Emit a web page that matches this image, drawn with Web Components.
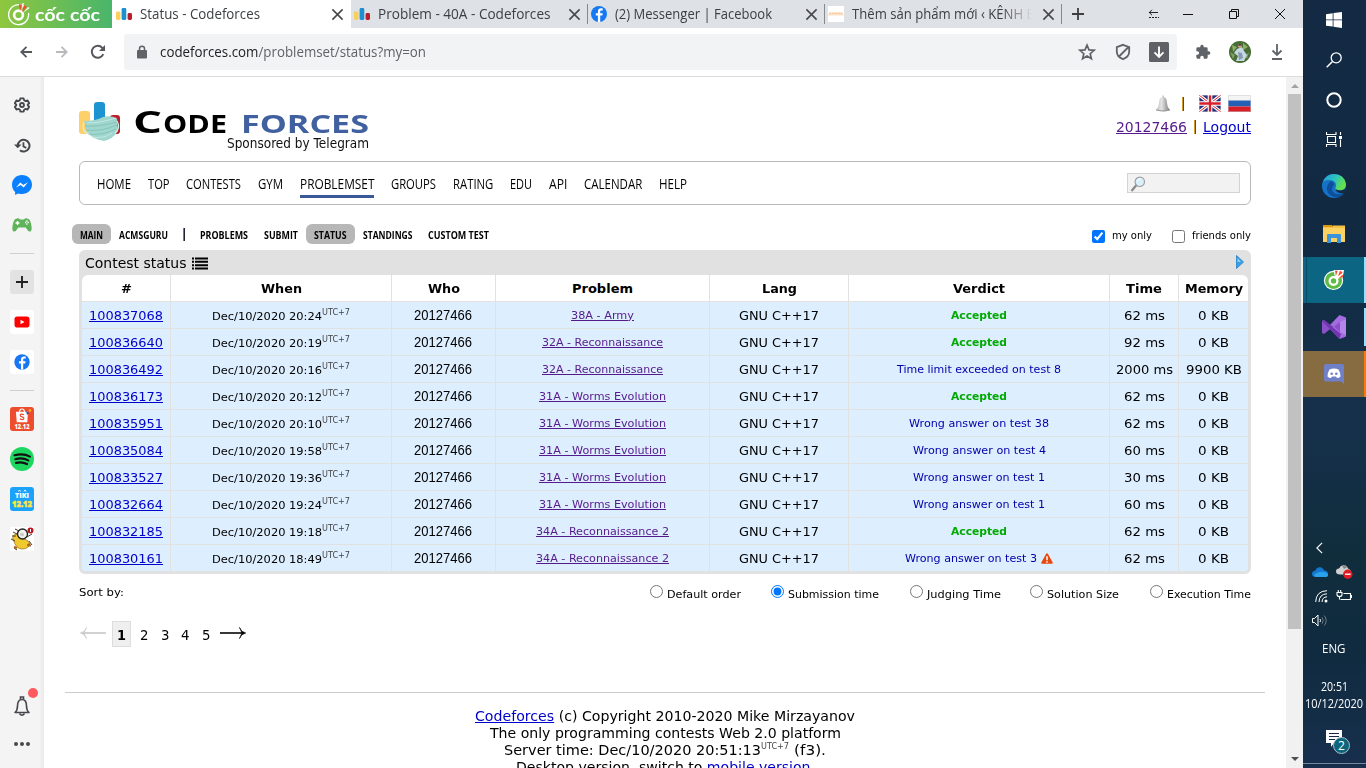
<!DOCTYPE html>
<html lang="en">
<head>
<meta charset="utf-8">
<title>Status - Codeforces</title>
<style>
html,body{margin:0;padding:0;height:100%;overflow:hidden;background:#fff}
body{font-family:"DejaVu Sans",Verdana,sans-serif;color:#000}
</style>
</head>
<body>
<app-desktop></app-desktop>
<script>
const define = (name, css, html) => customElements.define(name, class extends HTMLElement {
  constructor() {
    super();
    const tpl = document.createElement('template');
    tpl.innerHTML = `<style>${css}</style>${typeof html === 'function' ? html(this) : html}`;
    this.attachShadow({mode: 'open'}).appendChild(document.importNode(tpl.content, true));
  }
});
/* text run with a fixed advance width */
const t = (w, s, style = '') => `<fit-text w="${w}" style="${style}">${s}</fit-text>`;
const ic = (n, w, h, style = '') => `<ui-icon name="${n}" w="${w}" h="${h || w}" style="${style}"></ui-icon>`;

const coc = (ring, inner) => `<path d="M17.5 4.5A10 10 0 1 0 21.5 11" fill="none" stroke="${ring}" stroke-width="1.3"/><circle cx="11.5" cy="13" r="4.4" fill="none" stroke="${inner}" stroke-width="2.6"/>`;
const bars = '<rect x="0" y="5.5" width="4.4" height="8.5" rx="1.4" fill="#fbcf5b"/><rect x="5.6" y="2" width="4.7" height="12" rx="1.4" fill="#1e8fcf"/><rect x="11.6" y="7" width="4.4" height="7" rx="1.4" fill="#b81f2d"/>';
const ICONS = {
  coc: ['0 0 24 24', coc('#fff', '#fff') + '<path d="M13 9l-1-7 3 1zM15 10l2-7 3 2z" fill="#f0502f"/><path d="M14.500 9l1-8 1.500.3zM16 11l5-6 1.500 1z" fill="#fff"/>'],
  coctask: ['0 0 24 24', '<circle cx="11.500" cy="12.500" r="10.500" fill="#fff"/><circle cx="11.500" cy="12.500" r="9.300" fill="#5fba46"/><circle cx="11.500" cy="13" r="4.200" fill="#5fba46" stroke="#fff" stroke-width="2.500"/><path d="M13 9L11.500 1 23 1 21.500 9l-6 2z" fill="#fff"/><path d="M14 8l-.8-6.500L16 2zM16.500 8l2-6.500L21.500 4zM17 10l4.500-4 .5 3z" fill="#ee5130"/>'],
  bars: ['0 0 16 16', bars],
  close: ['0 0 14 14', '<path d="M1.500 1.500l11 11M12.500 1.500l-11 11" stroke="#46484b" stroke-width="1.700"/>'],
  fb: ['0 0 16 16', '<circle cx="8" cy="8" r="8" fill="#1479f2"/><path d="M9.200 16V9.600h2.100l.4-2.400H9.200V5.800c0-.8.4-1.300 1.300-1.300h1.200V2.500c-2.900-.6-4.800.2-4.800 2.900v1.800H4.800v2.400h2.100V16z" fill="#fff"/>'],
  shopfav: ['0 0 16 16', '<path d="M0 0h16v16H0z" fill="#fff"/><path d="M1 7.500h14" stroke="#fbc998" stroke-width="2" stroke-dasharray="2.500 .3"/><path d="M0 9h16" stroke="#fbe0c4" stroke-width="1"/>'],
  plus: ['0 0 12 12', '<path d="M6 0v12M0 6h12" stroke="#3c3e40" stroke-width="1.800"/>'],
  collapse: ['0 0 12 10', '<path d="M1 3.500h9M4 .8L1.300 3.500 4 6.200" fill="none" stroke="#222" stroke-width="1"/><path d="M1 8.500h10" stroke="#222" stroke-dasharray="2 1"/>'],
  min: ['0 0 10 10', '<path d="M0 5.500h10" stroke="#111"/>'],
  restore: ['0 0 10 10', '<path d="M.5 2.500h7v7h-7zM2.500 2V.5h7v7H8" fill="none" stroke="#111"/>'],
  winclose: ['0 0 10 10', '<path d="M0 0l10 10M10 0L0 10" stroke="#111"/>'],
  back: ['0 0 12 12', '<path d="M12 6H1.500M6.500.8L1.300 6l5.200 5.200" fill="none" stroke="#55585c" stroke-width="1.800"/>'],
  fwd: ['0 0 12 12', '<path d="M0 6h10.500M5.500.8L10.700 6l-5.200 5.200" fill="none" stroke="#b8babd" stroke-width="1.800"/>'],
  reload: ['0 0 16 16', '<path d="M13.300 10.200A6 6 0 1 1 12.300 3.800L14 5.500" fill="none" stroke="#55585c" stroke-width="2"/><path d="M15 1v6H9z" fill="#55585c"/>'],
  lock: ['0 0 12 14', '<rect x="1" y="5" width="10" height="8.500" rx="1" fill="#5f6368"/><path d="M3.500 5.500V3.800a2.500 2.500 0 0 1 5 0v1.700" fill="none" stroke="#5f6368" stroke-width="1.500"/>'],
  star: ['0 0 18 18', '<path d="M9 2.200l2 4.700 5.100.4-3.900 3.400 1.200 5L9 13l-4.400 2.700 1.200-5L1.900 7.300 7 6.900z" fill="none" stroke="#5f6368" stroke-width="1.700"/>'],
  shield: ['0 0 18 18', '<path d="M9 1.800l6.200 2.300v4.400c0 3.700-2.600 6.300-6.200 7.700-3.600-1.400-6.200-4-6.200-7.700V4.100zM5 13.500l9-9" fill="none" stroke="#5f6368" stroke-width="1.800"/>'],
  dlbox: ['0 0 20 20', '<rect width="20" height="20" rx="1.500" fill="#5f6166"/><path d="M10 4.500v10M5.500 10.300l4.500 4.500 4.500-4.500" fill="none" stroke="#fff" stroke-width="1.900"/>'],
  puzzle: ['0 0 24 24', '<path d="M20.500 11H19V7a2 2 0 0 0-2-2h-4V3.500a2.500 2.500 0 0 0-5 0V5H4a2 2 0 0 0-2 2v3.800h1.500a2.700 2.700 0 0 1 0 5.400H2V20a2 2 0 0 0 2 2h3.800v-1.500a2.700 2.700 0 0 1 5.400 0V22H17a2 2 0 0 0 2-2v-4h1.500a2.500 2.500 0 0 0 0-5z" fill="#5f6368"/>'],
  avatar: ['0 0 22 22', '<circle cx="11" cy="11" r="11" fill="#476c35"/><path d="M3 4l5 2-4 5zM14 2l5 4-5 3z" fill="#8cae65"/><path d="M1 11l5 3-2 4zM16 15l4-4-2 7z" fill="#7fa060"/><path d="M8 8l5-2 2 4 3 4-3 6H7l2-5-4-3z" fill="#c8d7e6"/><path d="M9 11l4 1 1 5-4 2z" fill="#889cac"/><circle cx="11" cy="5" r="2" fill="#c9a48c"/><path d="M9 4.500q2-3 4 0z" fill="#222"/>'],
  download: ['0 0 12 16', '<path d="M6 0v11M1.500 6.500L6 11l4.500-4.500M1 15h10" fill="none" stroke="#5f6368" stroke-width="1.800"/>'],
  gear: ['0 0 24 24', '<path d="M9.500 2h5l.7 3 2.200 1.200 3-1 2.400 4.200-2.300 2.100v1l2.300 2.100-2.400 4.200-3-1-2.200 1.200-.7 3h-5l-.7-3-2.200-1.200-3 1-2.400-4.200 2.300-2.100v-1L1.200 9.400l2.400-4.200 3 1L8.800 5z" fill="none" stroke="#46484b" stroke-width="2.700" stroke-linejoin="round"/><circle cx="12" cy="12" r="3" fill="none" stroke="#46484b" stroke-width="2.700"/>'],
  history: ['0 0 18 16', '<path d="M4 8A6.200 6.200 0 1 1 6.300 13" fill="none" stroke="#46484b" stroke-width="2.100"/><path d="M0 7h8L4 11z" fill="#46484b"/><path d="M10 4.500V9l3 1.500" fill="none" stroke="#46484b" stroke-width="1.900"/>'],
  messenger: ['0 0 20 20', '<path d="M10 0C4.400 0 0 4.100 0 9.700c0 2.900 1.200 5.400 3.100 7.200V20l3-1.500c1.200.4 2.500.6 3.900.6 5.600 0 10-4.100 10-9.500S15.600 0 10 0z" fill="#0a80ff"/><path d="M4 12.500l4.300-5 3 2.500L16 7.200l-4.300 5.200-3-2.400z" fill="#fff"/>'],
  pad: ['0 0 20 14', '<path d="M4 .7q3-1 4 .8h4q1-1.800 4-.8 2 .6 3 5 1.500 6-.2 7.500-1.600 1-3.300-1.200L13.700 9.500H6.300L4.500 12q-1.700 2.200-3.300 1.200Q-.5 11.700 1 5.700 2 1.300 4 .7z" fill="#5fb35a"/><path d="M5.500 3v4M3.500 5h4" stroke="#fff" stroke-width="1.400"/><path d="M13 4.500h1.300M15.500 4.500h1.300M14.200 3h1.300M14.200 6.200h1.300" stroke="#fff" stroke-width="1.300"/>'],
  addbox: ['0 0 24 24', '<rect width="24" height="24" rx="3" fill="#e2e2e2"/><path d="M12 6v12M6 12h12" stroke="#222" stroke-width="1.900"/>'],
  yt: ['0 0 24 24', '<rect width="24" height="24" rx="3" fill="#fff"/><rect x="4.500" y="6.500" width="15" height="11" rx="2.800" fill="#f00"/><path d="M10.500 9.700v4.600l4-2.300z" fill="#fff"/>'],
  fbbox: ['0 0 24 24', '<rect width="24" height="24" rx="3" fill="#fff"/><circle cx="12" cy="12" r="7.700" fill="#1877f2"/><path d="M13.200 19.600v-6.200h2l.4-2.200h-2.400V9.800c0-.8.4-1.200 1.300-1.200h1.200v-2c-2.900-.5-4.700.3-4.700 2.900v1.700H9v2.200h2v6.200z" fill="#fff"/>'],
  shopee: ['0 0 24 24', '<rect width="24" height="24" rx="3" fill="#ee4d2d"/><path d="M6 4.800h12l-.7 10.500H6.700z" fill="#fff"/><path d="M9.500 5.500q0-3.500 2.500-3.500t2.500 3.500" fill="none" stroke="#fff" stroke-width="1.200"/><path d="M14 7.800q-3.800-1.500-3.800.6 0 1 2 1.500 2 .6 1.700 1.700-.8 1.800-4 .3" fill="none" stroke="#ee4d2d" stroke-width="1.200"/><path d="M16 4l3 2-2 2z" fill="#244fae"/><circle cx="20" cy="3.500" r="1.200" fill="#ffbc18"/><text x="12" y="22" text-anchor="middle" font-family="Open Sans" font-weight="800" font-size="6.500" fill="#fff" textLength="15" lengthAdjust="spacingAndGlyphs">12.12</text>'],
  spotify: ['0 0 24 24', '<circle cx="12" cy="12" r="12" fill="#1ed760"/><path d="M4.500 8.300q8.500-2.500 15.500 1.300M5.300 12.200q7-2 13 1.200M6 15.900q6-1.500 11 1.100" fill="none" stroke="#111" stroke-width="2.200" stroke-linecap="round"/>'],
  tiki: ['0 0 24 24', '<rect width="24" height="24" rx="3" fill="#1ba2fb"/><path d="M8.500 4.500q1-3 2 0M14 4.500q1-3 2 0" fill="none" stroke="#fff"/><text x="12" y="11" text-anchor="middle" font-family="Open Sans" font-weight="800" font-size="7.500" fill="#fff" textLength="14" lengthAdjust="spacingAndGlyphs">TIKI</text><text x="12" y="20.300" text-anchor="middle" font-family="Open Sans" font-weight="800" font-size="8.500" fill="#ffe739" stroke="#ffe739" stroke-width=".5" textLength="20" lengthAdjust="spacingAndGlyphs">12.12</text>'],
  duck: ['0 0 24 24', '<path d="M0 0h24v24H0z" fill="#fff"/><path d="M3 12q-1-4 3-5l12 7 2 3q-2 5-8 5T3 12z" fill="#efc92d" stroke="#9a7a26" stroke-width=".8"/><path d="M3 5l4 2M1 12l4 2M17 10l5-3M19 14l3 4M4 21l3 2M17 18l4 1M5 2l4 2M2 9l4 0" stroke="#4c3c28" stroke-width="1"/><circle cx="12.500" cy="7" r="5" fill="#f5f5ef" stroke="#222" stroke-width="1.400"/><circle cx="12" cy="7.500" r="2" fill="#ccc"/><path d="M6 19.500l-1 2M18 17l2 2" stroke="#b4631b" stroke-width="3"/><circle cx="20.500" cy="3.500" r="3" fill="#b9161d"/><path d="M20.500 2v3" stroke="#fff"/>'],
  bell: ['0 0 18 22', '<path d="M2 17.500q2.500-2 2.500-6.500 0-6.500 4.500-6.500t4.500 6.500q0 4.500 2.500 6.500z" fill="none" stroke="#46484b" stroke-width="1.600" stroke-linejoin="round"/><path d="M7.500 4V2h3v2M6.500 18.500q2.500 3.500 5 0" fill="none" stroke="#46484b" stroke-width="1.600"/>'],
  dots: ['0 0 16 4', '<circle cx="2" cy="2" r="2" fill="#46484b"/><circle cx="8" cy="2" r="2" fill="#46484b"/><circle cx="14" cy="2" r="2" fill="#46484b"/>'],
  mask: ['0 0 42 40', '<rect x="0" y="9" width="11" height="23" rx="3" fill="#fdd06a"/><rect x="15" y="0" width="11" height="25" rx="3" fill="#1c94d2"/><rect x="31" y="13" width="10" height="19" rx="3" fill="#bd1f2d"/><path d="M5 19q12 0 19-4 8-2 14 1.500l1 12.500q-5 8-14 10-12-2-17-9z" fill="#9fd6ce"/><path d="M6 24q14 1 32-4M7 28q15 2 31-5M9 32q14 2 28-5" fill="none" stroke="#86c5bb"/><path d="M8 21q13 0 29-5M13 35q12 2 20-4" fill="none" stroke="#c4e8e1"/><path d="M5 20q-3 10 5 12M38 19q4 7-2 12" fill="none" stroke="#d8efe9" stroke-width="1.100"/>'],
  graybell: ['0 0 16 17', '<defs><linearGradient id="g"><stop stop-color="#bbb"/><stop offset=".4" stop-color="#e4e4e4"/><stop offset="1" stop-color="#777"/></linearGradient></defs><path d="M7 2V.5h2V2q3 1 3 6 0 4 3 7-7 3-14 0 3-3 3-7 0-5 3-6z" fill="url(#g)"/><path d="M1 15q7 2 14 0" stroke="#999" fill="none"/>'],
  uk: ['0 0 22 17', '<path d="M0 0h22v17H0z" fill="#2a3379"/><path d="M0 0l22 17M22 0L0 17" stroke="#fff" stroke-width="3.200"/><path d="M0 0l22 17M22 0L0 17" stroke="#d22" stroke-width="1"/><path d="M11 0v17M0 8.500h22" stroke="#fff" stroke-width="4.600"/><path d="M11 0v17M0 8.500h22" stroke="#d81f2c" stroke-width="2.400"/><path d="M.5.500h21v16H.5z" fill="none" stroke="#fff" stroke-opacity=".35"/>'],
  ru: ['0 0 23 17', '<path d="M0 0h23v17H0z" fill="#f4f4f4"/><path d="M0 5.500h23v6H0z" fill="#2560b5"/><path d="M0 11.500h23V17H0z" fill="#d81f28"/><path d="M.5.500h22v16H.5z" fill="none" stroke="#ccc" stroke-opacity=".5"/>'],
  mag: ['0 0 16 16', '<path d="M1.500 15l5-6" stroke="#8b8b8b" stroke-width="2.300"/><circle cx="9.800" cy="5.800" r="4.700" fill="#d9f0fb" stroke="#9b9fa3" stroke-width="1.200"/><path d="M7 5q1.500-3 4-2" stroke="#fff" fill="none"/>'],
  list: ['0 0 16 13', '<path d="M0 1.500h2M0 4.800h2M0 8.200h2M0 11.500h2M3 1.500h13M3 4.800h13M3 8.200h13M3 11.500h13" stroke="#000" stroke-width="1.900"/>'],
  play: ['0 0 8 14', '<path d="M.5.500L7.500 7l-7 6.500z" fill="#34a1e6" stroke="#3a8ccc"/><path d="M1.500 3L5 7H1.500z" fill="#8bd0f7"/>'],
  warn: ['0 0 12 11', '<path d="M6 .3q.7 0 1 .7l4.700 8.500q.4 1.300-.8 1.300H1.100Q-.1 10.800.3 9.500L5 1q.3-.7 1-.7z" fill="#e8480c"/><path d="M6 3.300v3.900M6 8.200v1.500" stroke="#fff" stroke-width="1.500"/>'],
  larr: ['0 0 26 12', '<path d="M26 6H2" stroke="#ccc" stroke-width="1.800"/><path d="M6.500.5Q5 5 .3 6 5 7 6.500 11.500L4 6z" fill="#ccc" stroke="#ccc" stroke-width=".7"/>'],
  rarr: ['0 0 26 12', '<path d="M0 6h24" stroke="#222" stroke-width="1.800"/><path d="M19.500.5Q21 5 25.700 6 21 7 19.500 11.500L22 6z" fill="#000" stroke="#000" stroke-width=".7"/>'],
  win: ['0 0 16 16', '<path d="M0 2.200L6.700 1.200v6.300H0zM7.500 1.100L16 0v7.500H7.500zM0 8.300h6.700v6.300L0 13.700zM7.500 8.300H16V16l-8.500-1.200z" fill="#fff"/>'],
  tsearch: ['0 0 16 16', '<circle cx="10.200" cy="5.800" r="5" fill="none" stroke="#fff" stroke-width="1.300"/><path d="M6.500 9.500L.7 15.300" stroke="#fff" stroke-width="1.500"/>'],
  cortana: ['0 0 16 16', '<circle cx="8" cy="8" r="6.700" fill="none" stroke="#fff" stroke-width="2"/>'],
  taskview: ['0 0 16 16', '<path d="M.5 0v2.500h9.500V0M.5 15v-2.500h9.500V15M1.500 4.500h8v6h-8zM14.500 0v3M14.500 7.500V15" fill="none" stroke="#fff" stroke-width="1.100"/><path d="M13 4h3v3h-3z" fill="#fff"/>'],
  edge: ['0 0 24 24', '<defs><linearGradient id="e" x2="1" y2=".4"><stop stop-color="#2493e0"/><stop offset=".55" stop-color="#2cc4c0"/><stop offset="1" stop-color="#65df4c"/></linearGradient></defs><circle cx="12" cy="12" r="12" fill="#1572c6"/><path d="M0 12Q0 6 6 6q8 0 8 5 0 3-1 4 2 2 7 1 4-1 4-6Q22 0 12 0 2 0 0 12z" fill="url(#e)"/><path d="M9 7Q4 11 5 16q2 7 10 7.500 5-1 7-4.500-8 3-11-1-2-2 0-6 3-2-2-5z" fill="#0d4f9d"/><path d="M13.500 15q3 2.500 9 .5l1.500-2L23 19l-2 .5q-7-.5-7.500-4.500z" fill="#132a43"/>'],
  folder: ['0 0 22 19', '<path d="M0 1h9l1 2H0z" fill="#d8960b"/><path d="M0 3h22v15H0z" fill="#fbd164"/><path d="M0 3h9l1-1.500h12V4H0z" fill="#f5c243"/><path d="M4 19v-8q0-1 1-1h12q1 0 1 1v8h-4v-5H8v5z" fill="#3b94db"/>'],
  vs: ['0 0 24 24', '<path d="M0 6l2-1 16 13V6L2 19l-2-1z" fill="#8a4fc9"/><path d="M17.500 0L24 2.500v19L17.500 24 8 14l3.500-3 6.500 6V7l-6.500 5L8 10z" fill="#a56be0"/><path d="M0 6l2-1 17 14-1.500 5z" fill="#7336b0"/><path d="M18 7v10l6 3V4z" fill="#b685eb"/>'],
  discord: ['0 0 20 20', '<path d="M2 0h16q2 0 2 2v18l-3-2.500H2q-2 0-2-2V2q0-2 2-2z" fill="#7080c8"/><path d="M5.500 5.500q4.500-2 9 0 2 3 2 7-1.500 1.500-3.500 1.500l-1-1.500H8L7 14q-2 0-3.500-1.500 0-4 2-7z" fill="#fff"/><circle cx="7.700" cy="9.800" r="1.300" fill="#7080c8"/><circle cx="12.300" cy="9.800" r="1.300" fill="#7080c8"/>'],
  chev: ['0 0 8 14', '<path d="M7 1L1 7l6 6" fill="none" stroke="#fff" stroke-width="1.300"/>'],
  cloud: ['0 0 16 10', '<path d="M4 10Q0 10 0 7q0-3 3.200-3.300Q4.500 0 8 .2q3 .2 4.200 3.300Q16 3.700 16 7q0 3-3 3z" fill="#1278cf"/><path d="M4 10Q1 9 3 7q5-3 9-2 4 1 4 3t-3 2z" fill="#2aa2ea"/>'],
  cloudno: ['0 0 17 14', '<path d="M4 9.500Q0 9.500 0 6.500q0-3 3-3Q5-.2 8 .3q3 .2 4 3.200 3 1 3 4l-3 2z" fill="#d0d0d0"/><path d="M6 1Q9-1 11.500 2L8 4z" fill="#888"/><circle cx="11.800" cy="9.200" r="4.700" fill="#dd1c25"/><path d="M9 9.200h5.600" stroke="#fff" stroke-width="1.400"/>'],
  wifi: ['0 0 13 13', '<path d="M.7 12Q1 1 12 .7M4 12q.3-8 8-8.200M7 12q.3-5 5-5.200" fill="none" stroke="#fff"/><circle cx="11" cy="11" r="1.500" fill="#fff"/>'],
  batt: ['0 0 16 12', '<path d="M1 2.500h5v2Q6 6.500 3.500 6.500T1 4.500zM2.300 0v2.500M4.700 0v2.500M3.500 6.500V9.500M7.500 3.500h7v6h-10M15.500 5v3" fill="none" stroke="#fff" stroke-width="1.100"/>'],
  sound: ['0 0 16 13', '<path d="M.5 4.500h2L6 1v11L2.500 8.500h-2z" fill="none" stroke="#fff"/><path d="M8 5q1 1.500 0 3" stroke="#fff" fill="none"/><path d="M10 3.300q2.500 3.200 0 6.400M12.300 1.500q3.800 5 0 10" fill="none" stroke="#6d7c88"/>'],
  note: ['0 0 18 18', '<path d="M1 0h16v13H9l-3 4v-4H1z" fill="#fff"/><path d="M4 3.500h10M4 6.500h10M4 9.500h6" stroke="#132a43" stroke-width="1.200"/>'],
};
define('ui-icon', ':host{display:inline-block;line-height:0;flex:none}svg{display:block}', el => {
  const [box, body] = ICONS[el.getAttribute('name')];
  return `<svg viewBox="${box}" preserveAspectRatio="none" width="${el.getAttribute('w')}" height="${el.getAttribute('h')}">${body}</svg>`;
});

/* ---------- browser chrome ---------- */
define('browser-tab', `:host{display:flex;align-items:center;width:237px;height:28px;box-sizing:border-box;padding-left:3px;position:relative;font:14px/28px "Open Sans",sans-serif;color:#3c4043;border-right:1px solid transparent}
:host([active]){width:239px;background:#fff;padding-left:4px}
:host([sep])::after{content:"";position:absolute;right:-1px;top:4px;width:1px;height:20px;background:#85888c}
.t{flex:1;margin-left:8px;overflow:hidden;white-space:nowrap;height:28px}
:host([fade]) .t{-webkit-mask-image:linear-gradient(90deg,#000 150px,transparent 180px)}
.x{margin:0 6px 0 0}`, el => `${ic(el.getAttribute('icon'), 16)}<div class="t"><slot></slot></div><ui-icon class="x" name="close" w="13" h="13"></ui-icon>`);

define('tab-strip', `:host{display:flex;height:28px;background:#dee1e6;align-items:center}
.brand{width:112px;height:28px;box-sizing:border-box;background:linear-gradient(90deg,#8fc73e,#49b56b);display:flex;align-items:center;padding-left:7px;color:#fff;font:700 17px/28px Lato,"Open Sans",sans-serif}
.b{display:flex;justify-content:center;width:46px}.sp{flex:1}`,
`<div class="brand">${ic('coc', 24, 24)}${t(65, 'cốc cốc', 'margin:2px 0 0 4px')}</div>
<browser-tab active icon="bars">${t(120, 'Status - Codeforces')}</browser-tab>
<browser-tab sep icon="bars">${t(172.500, 'Problem - 40A - Codeforces')}</browser-tab>
<browser-tab sep icon="fb">${t(157, '(2) Messenger | Facebook')}</browser-tab>
<browser-tab sep fade icon="shopfav">${t(183, 'Thêm sản phẩm mới ‹ KÊNH B')}</browser-tab>
${ic('plus', 12, 12, 'margin-left:10px')}<div class="sp"></div>
<div class="b" style="width:22px">${ic('collapse', 12, 10)}</div><div class="b">${ic('min', 10)}</div><div class="b">${ic('restore', 10)}</div><div class="b">${ic('winclose', 10)}</div>`);

define('tool-bar', `:host{display:flex;height:48px;background:#fff;align-items:center;padding-left:8px;border-bottom:1px solid #dadce0;font:14px/36px "Open Sans",sans-serif;color:#202124}
.c{width:36px;display:flex;justify-content:center;flex:none}.r{width:37px}
.box{margin-left:8px;width:1053px;height:36px;background:#f1f3f4;border-radius:3px;display:flex;align-items:center;margin-right:7px}
.sp{flex:1}i{font-style:normal;color:#5f6368}`,
`<div class="c">${ic('back', 12)}</div><div class="c">${ic('fwd', 12)}</div><div class="c">${ic('reload', 16)}</div>
<div class="box"><div class="c">${ic('lock', 12, 14)}</div>${t(266, 'codeforces.com<i>/problemset/status?my=on</i>')}<div class="sp"></div>
<div class="c">${ic('star', 18)}</div><div class="c">${ic('shield', 18)}</div><div class="c">${ic('dlbox', 20)}</div></div>
<div class="c r">${ic('puzzle', 16)}</div><div class="c r">${ic('avatar', 22)}</div><div class="c r">${ic('download', 12, 16)}</div>`);

define('side-bar', `:host{display:flex;flex-direction:column;width:44px;box-sizing:border-box;background:linear-gradient(90deg,#f4f4f4 39px,#e9e9e9);padding:8px 0 6px}
.c{height:40px;display:flex;align-items:center;justify-content:center;position:relative;flex:none}
hr{border:0;height:1px;width:24px;background:#cfcfcf;margin:8px auto;flex:none}.sp{flex:1}
.dot{position:absolute;left:28px;top:2px;width:10px;height:10px;border-radius:50%;background:#ff5a60}`,
[['gear', 16], ['history', 17, 15], ['messenger', 20], ['pad', 20, 14], 0, ['addbox', 24], ['yt', 24], ['fbbox', 24], 0, ['shopee', 24], ['spotify', 24], ['tiki', 24], ['duck', 24]]
  .map(a => a ? `<div class="c">${ic(...a)}</div>` : '<hr>').join('') +
`<div class="sp"></div><div class="c">${ic('bell', 18, 22)}<span class="dot"></span></div><div class="c" style="height:36px">${ic('dots', 16, 4)}</div>`);

define('scroll-bar', `:host{display:flex;flex-direction:column;align-items:center;width:17px;background:#f1f1f1}
i{width:0;height:0;border:4px solid transparent}.u{border-top:0;border-bottom:4px solid #a3a3a3;margin:7px 0 6px}.d{border-bottom:0;border-top:4px solid #505050;margin:auto 0 7px}
div{width:13px;height:535px;background:#c1c1c1}`, '<i class="u"></i><div></div><i class="d"></i>');

/* ---------- Codeforces page ---------- */
define('cf-header', `:host{display:flex;justify-content:space-between;height:84px;box-sizing:border-box}
.logo{display:flex;padding-top:25px}.w{width:235px;margin-left:13px;text-align:right}
.n{display:flex;align-items:baseline;height:32px;line-height:24px;padding-top:8px;box-sizing:border-box;font-family:"Open Sans",sans-serif;font-weight:700;font-size:25px}
.s{font-size:14px;line-height:17px;color:#111;margin-top:1px}
.r{display:flex;flex-direction:column;align-items:flex-end;font-size:14px;padding-top:17px}
.f{display:flex;align-items:center;height:19px}.l{line-height:20px;padding-top:4px;display:flex}
b{width:2px;height:14px;background:linear-gradient(90deg,#d39a2c 50%,#5b4a2c 50%)}
a{color:#00c}a.v{color:#551a8b}`,
`<div class="logo">${ic('mask', 42, 40)}<div class="w"><div class="n">${t(29, 'C', 'font-size:30px;margin-left:-1px')}${t(64, 'ODE', 'margin-left:1px')}${t(128, 'FORCES', 'margin-left:14px;color:#41609f')}</div><div class="s">${t(142, 'Sponsored by Telegram')}</div></div></div>
<div class="r"><div class="f">${ic('graybell', 16, 17)}<b style="margin:0 15px 0 11px"></b>${ic('uk', 22, 17)}${ic('ru', 23, 17, 'margin-left:7px')}</div>
<div class="l"><a class="v" href="#">${t(71, '20127466', 'text-decoration:underline')}</a><b style="margin:3px 7px 0"></b><a href="#">${t(48, 'Logout', 'text-decoration:underline')}</a></div></div>`);

define('cf-menu', `:host{display:flex;align-items:center;height:44px;box-sizing:border-box;border:1px solid #b9b9b9;border-radius:6px;padding:0 10px 0 17px}
nav{display:flex;gap:16.800px;flex:1;font:15px/20px "Open Sans",sans-serif;padding-top:2px}
span{border-bottom:3px solid transparent;height:22px;padding-top:2px;display:flex}.on{border-color:#3b5998}
.q{width:113px;height:20px;box-sizing:border-box;background:#f2f2f2;border:1px solid #d3d3d3;padding:2px}`,
`<nav>${[['HOME', 34], ['TOP', 21.500], ['CONTESTS', 55], ['GYM', 25], ['PROBLEMSET', 74.500], ['GROUPS', 45], ['RATING', 40.300], ['EDU', 22], ['API', 18.300], ['CALENDAR', 58.300], ['HELP', 28]]
  .map(([s, w]) => `<span class="${s === 'PROBLEMSET' ? 'on' : ''}">${t(w, s)}</span>`).join('')}</nav><div class="q">${ic('mag', 16)}</div>`);

define('cf-submenu', `:host{display:flex;align-items:center;height:20px;margin:19px 0 6px -7px;font:700 11px/21px "Open Sans",sans-serif}
span{display:flex;height:20px;padding:0 8px;border-radius:6px}.on{background:#b7b7b7}b{width:2px;height:13px;background:linear-gradient(90deg,#4d86c6 50%,#223 50%);margin:0 7px}
.k{margin-left:auto;display:flex;align-items:center;font:11px/16px "DejaVu Sans",sans-serif;padding-top:4px}
input{margin:0 7px 0 20px;width:13px;height:13px;accent-color:#0075ff}`,
[['MAIN', 23], ['ACMSGURU', 49], 0, ['PROBLEMS', 48], ['SUBMIT', 34], ['STATUS', 32.500], ['STANDINGS', 49.500], ['CUSTOM TEST', 61]]
  .map(a => a ? `<span class="${/MAIN|STATUS/.test(a[0]) ? 'on' : ''}">${t(a[1], a[0])}</span>` : '<b></b>').join('') +
`<div class="k"><input type="checkbox" checked>${t(40, 'my only')}<input type="checkbox">${t(59, 'friends only')}</div>`);

const army = ['38A - Army', 63], rec = ['32A - Reconnaissance', 121], worm = ['31A - Worms Evolution', 127], rec2 = ['34A - Reconnaissance 2', 133];
const ok = ['Accepted', 56, 1];
const ROWS = [
  ['100837068', '20:24', army, ok, '62 ms', 41, '0 KB', 31],
  ['100836640', '20:19', rec, ok, '92 ms', 41, '0 KB', 31],
  ['100836492', '20:16', rec, ['Time limit exceeded on test 8', 164], '2000 ms', 57, '9900 KB', 56],
  ['100836173', '20:12', worm, ok, '62 ms', 41, '0 KB', 31],
  ['100835951', '20:10', worm, ['Wrong answer on test 38', 140], '62 ms', 41, '0 KB', 31],
  ['100835084', '19:58', worm, ['Wrong answer on test 4', 133], '60 ms', 41, '0 KB', 31],
  ['100833527', '19:36', worm, ['Wrong answer on test 1', 132], '30 ms', 41, '0 KB', 31],
  ['100832664', '19:24', worm, ['Wrong answer on test 1', 132], '60 ms', 41, '0 KB', 31],
  ['100832185', '19:18', rec2, ok, '62 ms', 41, '0 KB', 31],
  ['100830161', '18:49', rec2, ['Wrong answer on test 3', 132, 0, 1], '62 ms', 41, '0 KB', 31],
];
const U = 'text-decoration:underline';
define('cf-status', `:host{display:block;background:#e1e1e1;border-radius:6px;padding:0 3px 2px;height:324px;box-sizing:border-box;font-size:13px}
.h{display:flex;align-items:center;height:25px;padding:0 3px;font-size:14px;justify-content:space-between}
.h div{display:flex;align-items:center;gap:5px}
.g{display:grid;grid-template-columns:88px 220px 103px 213px 138px 260px 68px 69px;grid-template-rows:26px;grid-auto-rows:26px;gap:1px;border-radius:6px 6px 3px 3px;overflow:hidden}
.g>*{background:#def;display:flex;align-items:center;justify-content:center;white-space:nowrap}
.g>.th{background:#fff;font-weight:700}
.s{font-size:11px}.a{color:#00c}.v{color:#551a8b}.w{color:#00a}.k{color:#0a0;font-weight:700}
.g>.who{font-family:"Liberation Sans",Arial,sans-serif;font-size:14px;padding-right:1px}`,
`<div class="h"><div>${t(101.500, 'Contest status')}${ic('list', 16, 13, 'margin-top:2px')}</div>${ic('play', 8, 14, 'margin-top:-2px;margin-right:1px')}</div><div class="g">` +
[['#', 11], ['When', 41], ['Who', 32], ['Problem', 61], ['Lang', 35], ['Verdict', 52], ['Time', 36], ['Memory', 58]].map(([s, w]) => `<div class="th">${t(w, s)}</div>`).join('') +
ROWS.map(([id, time, p, v, ms, mw, kb, kw]) => `<div class="a">${t(74, id, U)}</div>
<div class="s">${t(110, 'Dec/10/2020 ' + time, 'margin-top:3px')}${t(28, 'UTC+7', 'font-size:8px;color:#444;margin-top:-6px')}</div>
<div class="who">${t(58, '20127466')}</div><div class="s v">${t(p[1], p[0], U)}</div><div>${t(80, 'GNU C++17')}</div>
<div class="s ${v[2] ? 'k' : 'w'}">${t(v[1], v[0])}${v[3] ? ic('warn', 12, 11, 'margin-left:4px') : ''}</div><div>${t(mw, ms)}</div><div>${t(kw, kb)}</div>`).join('') + '</div>');

define('cf-sort', `:host{display:flex;align-items:center;height:37px;font-size:11px;line-height:16px}
label{display:flex;align-items:center;padding-top:2px}input{margin:0 4px 4px 0;width:13px;height:13px;accent-color:#0075ff}.sp{flex:1}`,
`${t(45, 'Sort by:')}<div class="sp"></div>` +
[['Default order', 74, 0], ['Submission time', 91, 30], ['Judging Time', 74, 31], ['Solution Size', 72, 29], ['Execution Time', 84, 31]]
  .map(([s, w, m], i) => `<label style="margin-left:${m}px"><input type="radio" name="sort"${i === 1 ? ' checked' : ''}>${t(w, s, 'margin-top:3px')}</label>`).join(''));

define('cf-pager', `:host{display:flex;align-items:center;height:26px;margin-top:10px;padding-left:1px;font-size:14px;line-height:26px}
.on{box-sizing:border-box;width:19px;height:26px;border:1px solid #ddd;background:#efefef;font-weight:700;text-align:center;margin:0 9px 0 6px}
.n{margin:2px 12.200px 0 0}`,
`${ic('larr', 26, 12, 'margin-top:-2px')}<div class="on">${t(9, '1')}</div>${[2, 3, 4, 5].map(n => `<span class="n">${t(8.500, n)}</span>`).join('')}${ic('rarr', 26, 12, 'margin:-2px 0 0 -3px')}`);

define('cf-footer', `:host{display:block;margin:45px -14px 0;border-top:1px solid #ccc;padding-top:15px;font-size:14px;line-height:17px}
div{display:flex;justify-content:center;height:17px}a{color:#00c}`,
`<div>${t(380, '<a href="#">Codeforces</a> (c) Copyright 2010-2020 Mike Mirzayanov')}</div>
<div>${t(351, 'The only programming contests Web 2.0 platform')}</div>
<div>${t(257, 'Server time: Dec/10/2020 20:51:13')}${t(28, 'UTC+7', 'font-size:8px;color:#444;margin-top:-4px')}${t(32, '(f3).', 'margin-left:5px')}</div>
<div>${t(299, 'Desktop version, switch to <a href="#">mobile version</a>.')}</div>`);

define('cf-page', ':host{display:block;flex:1;padding:0 35px;overflow:hidden;background:#fff}', '<cf-header></cf-header><cf-menu></cf-menu><cf-submenu></cf-submenu><cf-status></cf-status><cf-sort></cf-sort><cf-pager></cf-pager><cf-footer></cf-footer>');

/* ---------- Windows taskbar ---------- */
define('task-bar', `:host{display:flex;flex-direction:column;width:63px;height:768px;background:linear-gradient(#142a44,#112a42 30%,#16304c 55%,#102d3c 72%,#102b40 85%,#172f4d);color:#fff;font:12px/17px "Open Sans",sans-serif}
.c{height:40px;display:flex;align-items:center;justify-content:center;flex:none;box-sizing:border-box;padding-right:1px}
.b{height:46px;border-right:2px solid transparent;padding-right:0}.b+.b{margin-top:1px}
.coc{background:#0b6583;border-right-color:#8fe3ff;border-left:1px solid #0b6583;box-shadow:inset 2px 0 #0b6583,inset 3px 0 #0a4a62;margin-top:0}
.vs{border-right-color:#8fe3ff;height:38px}.dis{background:#876c41;border-right:2px solid #ff7a05}
.sp{flex:1}.tr{display:flex;align-items:center;gap:8px;height:24px;padding-left:9px}
.n{position:relative}.n span{position:absolute;left:30px;top:18px;width:15px;height:15px;border-radius:50%;background:#0b667c;border:1px solid #aebfc8;text-align:center;font-size:12px;line-height:15px}
.end{height:1px;background:#75889a;margin:4px 0}`,
`${['win', 'tsearch', 'cortana', 'taskview'].map(n => `<div class="c">${ic(n, 16)}</div>`).join('')}
<div class="c b" style="margin-top:3px">${ic('edge', 24)}</div><div class="c b">${ic('folder', 22, 19)}</div>
<div class="c b coc" style="margin-top:1px">${ic('coctask', 22)}</div><div class="c b vs" style="margin:5px 0">${ic('vs', 24)}</div><div class="c b dis" style="margin:0">${ic('discord', 20)}</div>
<div class="sp"></div>
<div class="tr" style="padding-left:13px">${ic('chev', 7, 12)}</div>
<div class="tr">${ic('cloud', 16, 10)}${ic('cloudno', 17, 14)}</div>
<div class="tr" style="padding-left:12px">${ic('wifi', 13)}${ic('batt', 16, 12)}</div>
<div class="tr">${ic('sound', 16, 13)}</div>
<div style="text-align:center;margin:8px 0 21px;padding-right:2px">${t(23.500, 'ENG')}</div>
<div style="text-align:center;padding-right:1px">${t(27, '20:51')}</div><div style="text-align:center;margin-bottom:7px;padding-right:2px">${t(58, '10/12/2020')}</div>
<div class="c n">${ic('note', 18, 18)}<span>2</span></div><div class="end"></div>`);

define('app-desktop', `:host{display:flex;width:1366px;height:768px;overflow:hidden}
.win{width:1303px;display:flex;flex-direction:column}.body{flex:1;display:flex;min-height:0}`,
'<div class="win"><tab-strip></tab-strip><tool-bar></tool-bar><div class="body"><side-bar></side-bar><cf-page></cf-page><scroll-bar></scroll-bar></div></div><task-bar></task-bar>');

/* registered last so every ancestor's font is settled when the run is measured */
customElements.define('fit-text', class extends HTMLElement {
  constructor() {
    super();
    this.attachShadow({mode: 'open'}).innerHTML = '<style>:host{display:inline-block;white-space:nowrap;text-align:left;flex:none}span{display:inline-block;transform-origin:0 50%;text-decoration:inherit}</style><span><slot></slot></span>';
  }
  connectedCallback() {
    const w = +this.getAttribute('w'), s = this.shadowRoot.querySelector('span');
    const natural = s.getBoundingClientRect().width;
    this.style.width = w + 'px';
    if (natural) s.style.transform = `scaleX(${w / natural})`;
  }
});
</script>
</body>
</html>
